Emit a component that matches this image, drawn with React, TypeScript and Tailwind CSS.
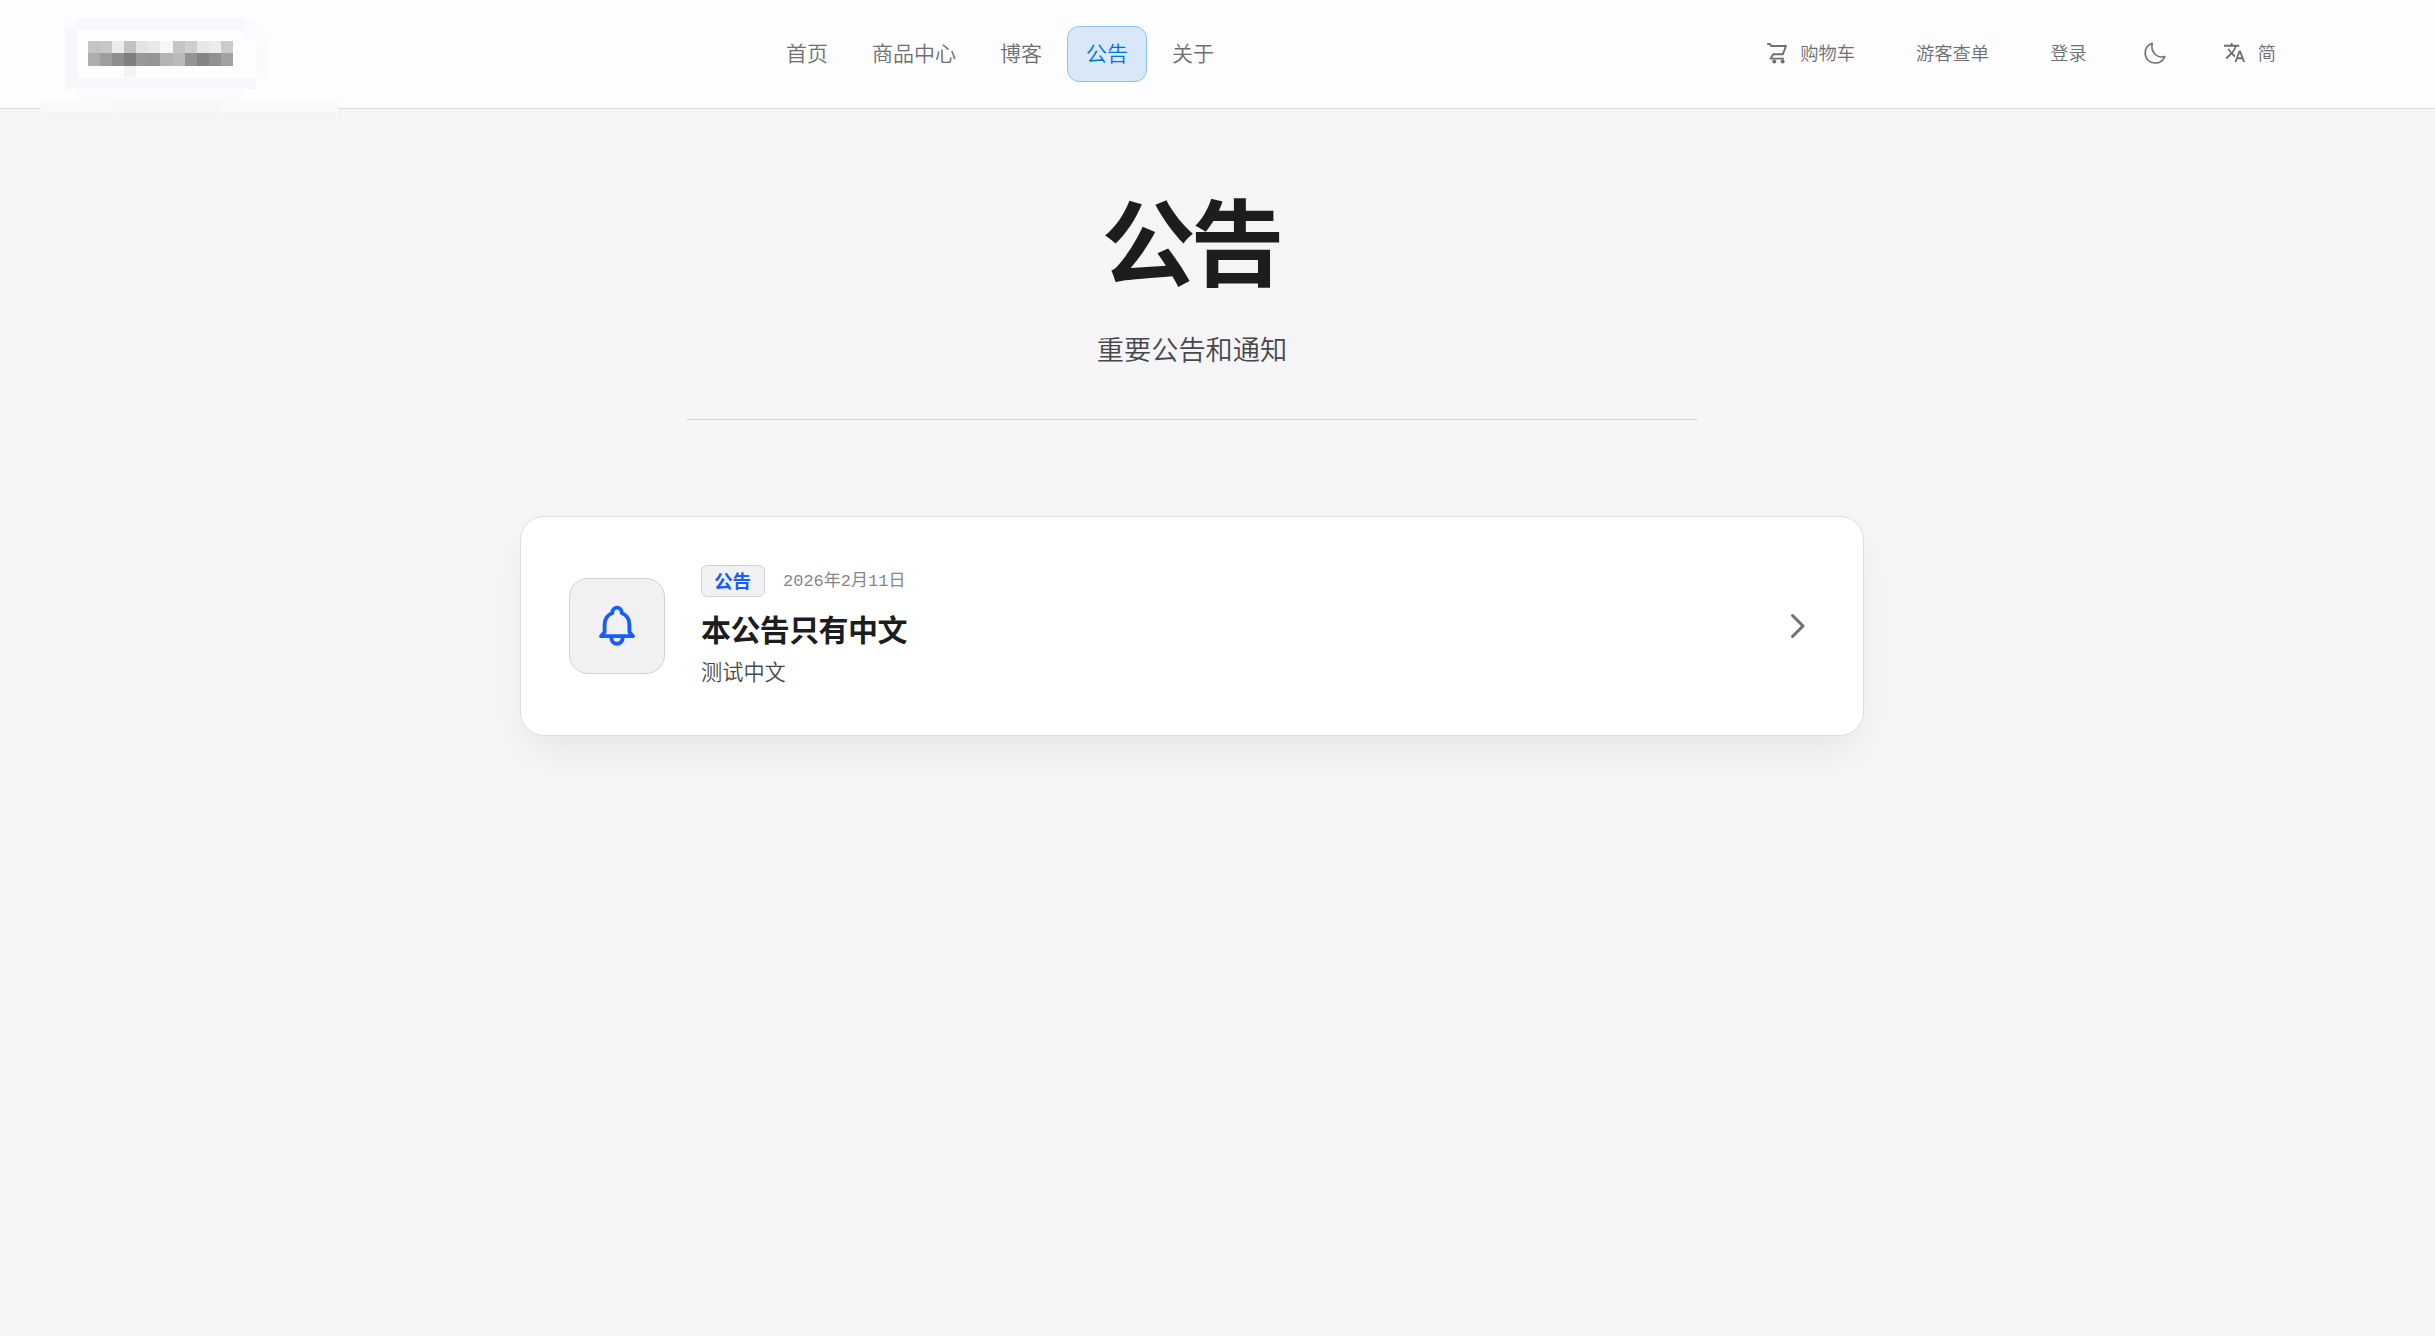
import { MdTranslate } from "react-icons/md";

const navItems = [
  { label: "首页" },
  { label: "商品中心" },
  { label: "博客" },
  { label: "公告", active: true },
  { label: "关于" },
];

// x, y, width, height, fill
const logoBlocks: [number, number, number, number, string][] = [
  [41, 101, 297, 12, "#f9f9f9"],
  [113, 101, 107, 12, "#f7f7f7"],
  [77, 89, 167, 12, "#fbfbfb"],
  [65, 18, 12, 12, "#fafbfc"],
  [77, 18, 167, 12, "#f6f8fb"],
  [244, 18, 12, 12, "#fafbfe"],
  [65, 30, 12, 48, "#f4f8fd"],
  [77, 30, 179, 48, "#fcfdff"],
  [244, 30, 12, 11, "#f9fbfe"],
  [65, 78, 191, 11, "#f5f7fa"],
  [256, 30, 12, 12, "#fcfcfd"],
  [256, 42, 12, 36, "#f9fafc"],
  [124, 65, 12, 12, "#f2f3f5"],
];

const logoRows = [
  ["#c3c4c6", "#c6c7c9", "#eaebed", "#c1c2c4", "#e2e3e5", "#e8e9eb", "#f5f6f8", "#c4c5c7", "#cdcecf", "#e5e6e8", "#ebecee", "#cacbcd"],
  ["#acadaf", "#9d9ea0", "#8d8e90", "#7d7e80", "#97989a", "#949597", "#b2b3b5", "#b9babc", "#939496", "#838486", "#909193", "#a1a2a4"],
];

function Logo() {
  return (
    <svg width="340" height="113" viewBox="0 0 340 113" shapeRendering="crispEdges" className="absolute left-0 top-0">
      {logoBlocks.map(([x, y, w, h, fill], i) => (
        <rect key={i} x={x} y={y} width={w} height={h} fill={fill} />
      ))}
      {logoRows.map((row, r) =>
        row.map((fill, c) => (
          <rect key={`${r}-${c}`} x={88.3 + c * 12.03} y={41 + r * 12.3} width={12.03} height={12.3} fill={fill} />
        ))
      )}
    </svg>
  );
}

function CartIcon() {
  return (
    <svg width="22" height="22" viewBox="0 0 22 22" fill="none" stroke="currentColor" strokeWidth="1.9" strokeLinejoin="round">
      <path d="M1.2 2H3.8L5.2 4H20L16.8 12.3H7.2L4.6 16.6H18" />
      <circle cx="8.2" cy="19.6" r="2" fill="currentColor" stroke="none" />
      <circle cx="16.6" cy="19.6" r="2" fill="currentColor" stroke="none" />
    </svg>
  );
}

function MoonIcon() {
  return (
    <svg width="24" height="24" viewBox="0 0 24 24" fill="none" stroke="currentColor" strokeWidth="1.6" strokeLinecap="round" strokeLinejoin="round">
      <path d="M9.2 2.2C4.8 3.9 2.2 7.8 2.2 12.2C2.2 17.8 6.6 22 12.2 22C16.4 22 20.2 19.8 21.8 15.4C14.8 17.8 7.2 11.6 9.2 2.2Z" />
    </svg>
  );
}

function BellIcon() {
  return (
    <svg width="42" height="42" viewBox="0 0 42 42" fill="none" stroke="currentColor" strokeWidth="3.8" strokeLinecap="round" strokeLinejoin="round">
      <path d="M5 31.2H37L33.4 27V19.5C33.4 13.8 30.3 9.8 25.6 8V7.2C25.6 1.2 16.4 1.2 16.4 7.2V8C11.7 9.8 8.6 13.8 8.6 19.5V27L5 31.2Z" />
      <path d="M15.2 32C15.2 41 26.8 41 26.8 32" />
    </svg>
  );
}

export default function App() {
  return (
    <div className="min-h-screen bg-[#f5f5f7] font-['Noto_Sans_CJK_SC',sans-serif] text-[#1d1d1f]">
      {/* Header */}
      <header className="relative flex h-[109px] items-center border-b border-[#dcdcde] bg-[#fdfdfd] pb-[1px]">
        <Logo />
        <nav className="ml-[767px] flex gap-[6px] text-[21px] font-[350] text-[#6e6e73]">
          {navItems.map((item) => (
            <a
              key={item.label}
              className={
                item.active
                  ? "flex h-14 items-center rounded-xl border border-[#8fc1f5] bg-[#d9e8f9] px-[18px] pb-[1px] text-[#0071e3]"
                  : "flex h-14 items-center rounded-xl border border-transparent px-[18px] pb-[1px]"
              }
            >
              {item.label}
            </a>
          ))}
        </nav>
        <div className="mb-[2px] ml-auto mr-[159px] flex items-center text-[18.3px] font-[350] text-[#6e6e73]">
          <a className="flex items-center gap-3">
            <CartIcon />
            购物车
          </a>
          <a className="ml-[61px]">游客查单</a>
          <a className="ml-[61px]">登录</a>
          <a className="ml-[56px]">
            <MoonIcon />
          </a>
          <a className="ml-[56px] flex items-center gap-3">
            <MdTranslate className="size-[23px]" />
            简
          </a>
        </div>
      </header>

      <main className="flex flex-col items-center pr-[51px]">
        {/* Page title */}
        <div className="flex w-[1010px] flex-col items-center border-b border-[#d6d6d9] pb-[51px] pt-[81px]">
          <h1 className="mr-[3px] text-[94px] font-bold leading-[96px] tracking-[-5px]">公告</h1>
          <p className="mt-[42px] text-[27.2px] font-[350] leading-[40px] text-[#48484a]">重要公告和通知</p>
        </div>

        {/* Notice card */}
        <article className="mt-[96px] flex h-[220px] w-[1344px] items-center rounded-3xl border border-[#dededf] bg-white px-12 pb-[1px] shadow-[0_20px_40px_-12px_rgba(0,0,0,0.08)]">
          <div className="flex size-24 items-center justify-center rounded-[19px] border border-[#d2d2d4] bg-[#f1f1f4] text-[#155dfc]">
            <BellIcon />
          </div>
          <div className="ml-9 flex-1">
            <div className="flex items-center gap-[18px]">
              <span className="flex h-8 w-16 items-center justify-center rounded-md border border-[#d2d2d4] bg-[#f1f1f4] pb-[2px] pr-[1px] text-[18.6px] font-bold text-[#155dfc]">
                公告
              </span>
              <time className="mt-[2px] font-['Liberation_Mono','Noto_Sans_CJK_SC',monospace] text-[17px] font-normal text-[#86868b]">
                2026年2月11日
              </time>
            </div>
            <h2 className="mt-[10px] text-[30px] font-bold leading-[42px] tracking-[-0.6px]">本公告只有中文</h2>
            <p className="mt-[6px] text-[21.2px] font-[350] leading-[32px] text-[#48484a]">测试中文</p>
          </div>
          <svg width="36" height="36" viewBox="0 0 24 24" fill="none" stroke="#6e6e73" strokeWidth="2" strokeLinecap="round" strokeLinejoin="round">
            <path d="m9 5 7 7-7 7" />
          </svg>
        </article>
      </main>
    </div>
  );
}
